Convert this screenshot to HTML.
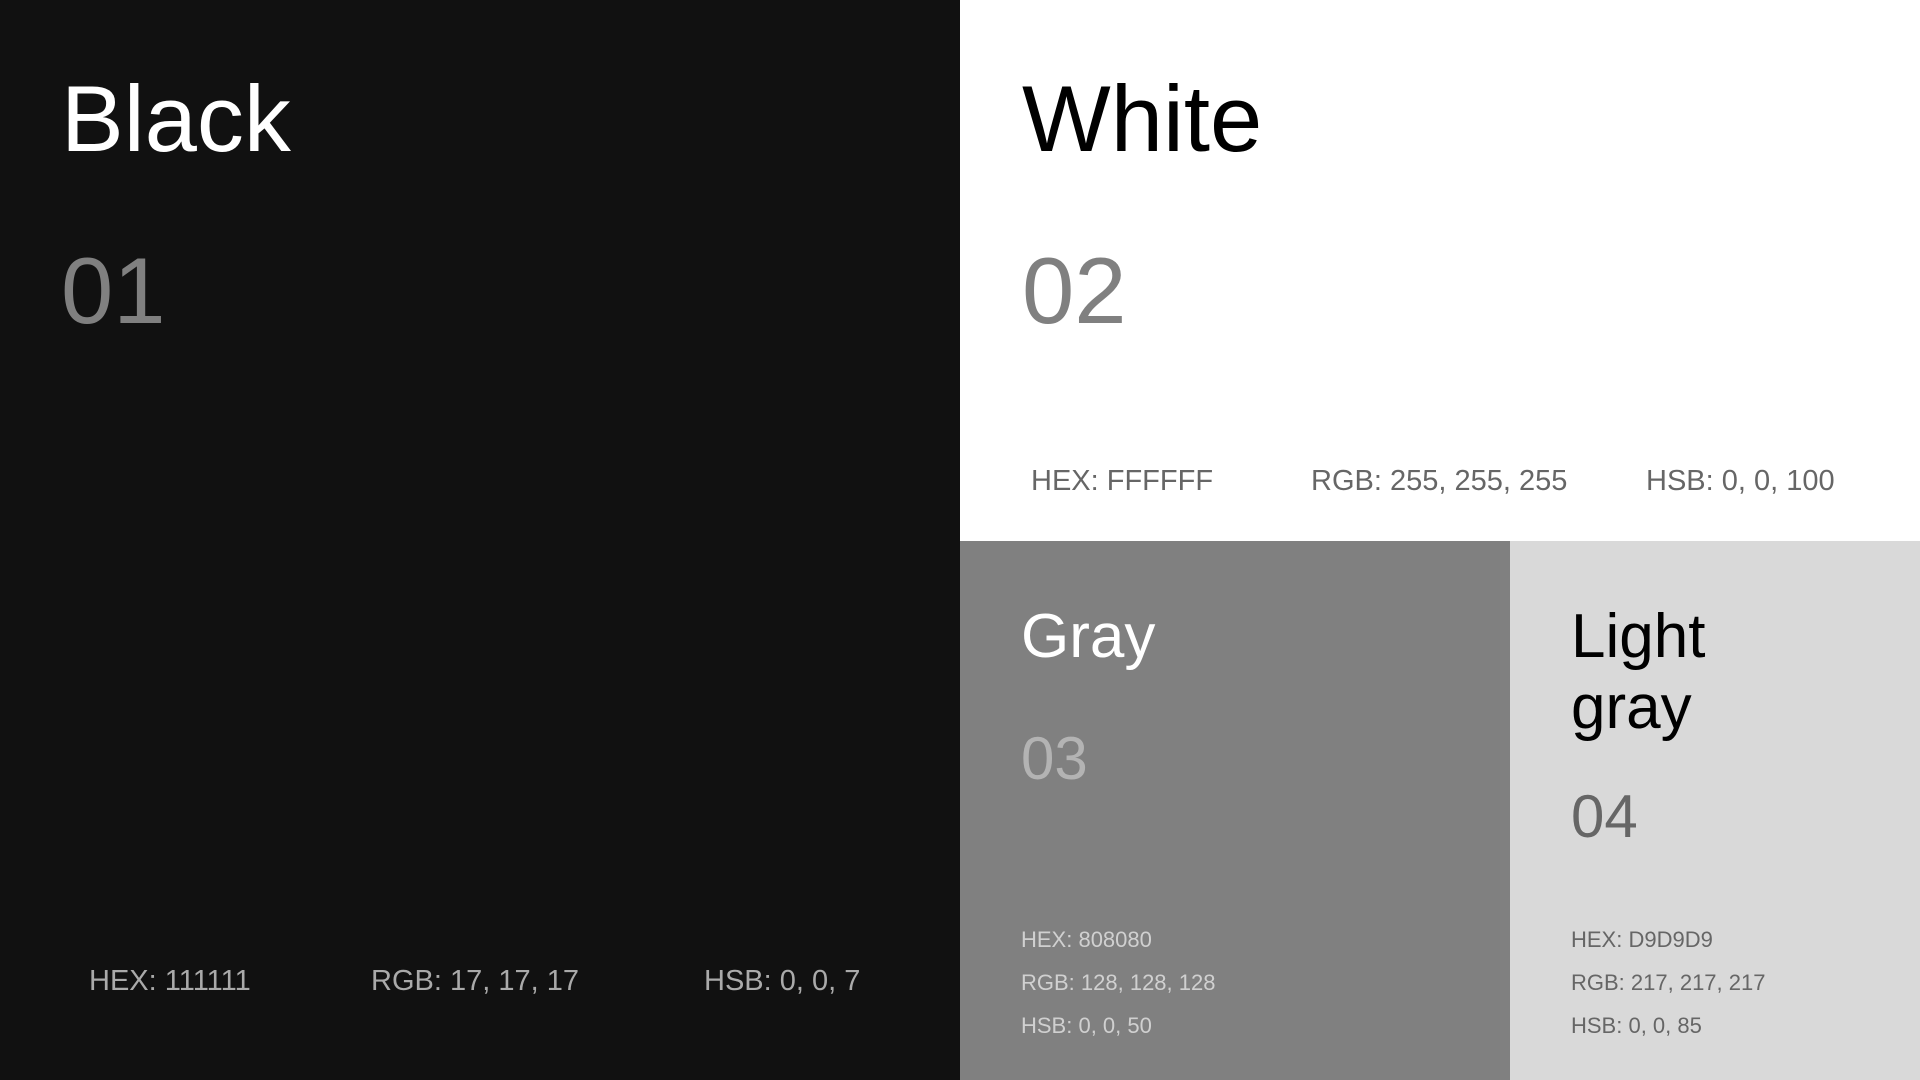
<!DOCTYPE html>
<html><head><meta charset="utf-8"><style>
body{margin:0;width:1920px;height:1080px;position:relative;overflow:hidden;font-family:"Liberation Sans",sans-serif}
.p{position:absolute}
.t{position:absolute;line-height:1;white-space:nowrap}
</style></head><body>
<div class="p" style="left:0;top:0;width:960px;height:1080px;background:#111"></div>
<div class="p" style="left:960px;top:0;width:960px;height:541px;background:#fff"></div>
<div class="p" style="left:960px;top:541px;width:550px;height:539px;background:#808080"></div>
<div class="p" style="left:1510px;top:541px;width:410px;height:539px;background:#d9d9d9"></div>

<div class="t" style="left:61px;top:72px;font-size:94px;color:#fff">Black</div>
<div class="t" style="left:61px;top:244px;font-size:94px;color:#808080">01</div>
<div class="t" style="left:89px;top:967px;font-size:29px;color:#aaa">HEX: 111111</div>
<div class="t" style="left:371px;top:967px;font-size:29px;color:#aaa">RGB: 17, 17, 17</div>
<div class="t" style="left:704px;top:967px;font-size:29px;color:#aaa">HSB: 0, 0, 7</div>

<div class="t" style="left:1022px;top:72px;font-size:94px;color:#000">White</div>
<div class="t" style="left:1022px;top:244px;font-size:94px;color:#808080">02</div>
<div class="t" style="left:1031px;top:467px;font-size:29px;color:#666">HEX: FFFFFF</div>
<div class="t" style="left:1311px;top:467px;font-size:29px;color:#666">RGB: 255, 255, 255</div>
<div class="t" style="left:1646px;top:467px;font-size:29px;color:#666">HSB: 0, 0, 100</div>

<div class="t" style="left:1021px;top:606px;font-size:62px;color:#fff">Gray</div>
<div class="t" style="left:1021px;top:729px;font-size:60px;color:#b3b3b3">03</div>
<div class="t" style="left:1021px;top:929px;font-size:22px;color:#d0d0d0">HEX: 808080</div>
<div class="t" style="left:1021px;top:972px;font-size:22px;color:#d0d0d0">RGB: 128, 128, 128</div>
<div class="t" style="left:1021px;top:1015px;font-size:22px;color:#d0d0d0">HSB: 0, 0, 50</div>

<div class="t" style="left:1571px;top:606px;font-size:62px;color:#000">Light</div>
<div class="t" style="left:1571px;top:677px;font-size:62px;color:#000">gray</div>
<div class="t" style="left:1571px;top:787px;font-size:60px;color:#666">04</div>
<div class="t" style="left:1571px;top:929px;font-size:22px;color:#666">HEX: D9D9D9</div>
<div class="t" style="left:1571px;top:972px;font-size:22px;color:#666">RGB: 217, 217, 217</div>
<div class="t" style="left:1571px;top:1015px;font-size:22px;color:#666">HSB: 0, 0, 85</div>
</body></html>
